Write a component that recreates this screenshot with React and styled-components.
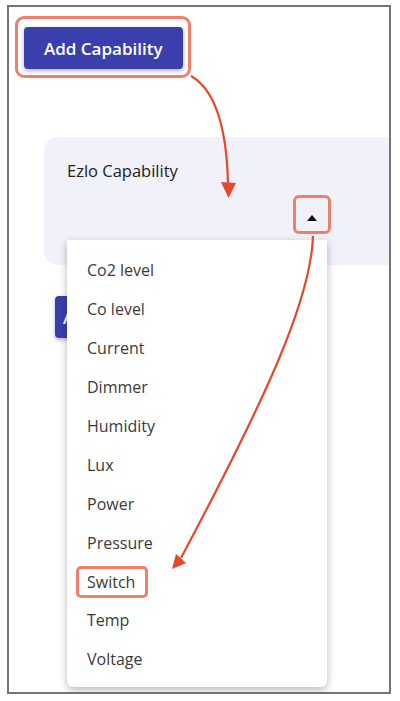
import React from "react";
import styled, { createGlobalStyle } from "styled-components";

const GlobalStyle = createGlobalStyle`
  html, body {
    margin: 0;
    padding: 0;
    background: #ffffff;
    font-family: "Open Sans", "Liberation Sans", sans-serif;
  }
`;

const Frame = styled.div`
  position: relative;
  box-sizing: border-box;
  width: 384px;
  height: 689px;
  margin: 5px 0 0 7px;
  border: 2px solid #747474;
  overflow: hidden;
  background: #ffffff;
`;

const Highlight = styled.div`
  display: inline-flex;
  border: 3px solid #ee806b;
  border-radius: 9px;
  padding: 8px 5px 6px 6px;
  margin: 9px 0 0 6px;
`;

const PrimaryButton = styled.button`
  height: 42px;
  padding: 0 ${(p) => p.$padX || 20}px;
  border: none;
  border-radius: 4px;
  background: #3b3fae;
  color: #ffffff;
  font-family: inherit;
  font-size: 17px;
  font-weight: 600;
  box-shadow: 0 2px 4px rgba(40, 40, 90, 0.35);
  cursor: pointer;
`;

const Card = styled.div`
  margin: 59px -20px 0 35px;
  padding: 24px 0 23px 23px;
  background: #f0f1f9;
  border-radius: 14px;
`;

const Label = styled.div`
  font-size: 16.5px;
  line-height: 20px;
  color: #222222;
`;

const SelectField = styled.div`
  position: relative;
  width: 260px;
  margin-top: 14px;
  padding-bottom: 6px;
  display: flex;
  justify-content: flex-end;
  border-bottom: 2px solid #3b3fae;
`;

const IconBox = styled.div`
  box-sizing: border-box;
  width: 38px;
  height: 39px;
  margin-right: -4px;
  display: flex;
  align-items: center;
  justify-content: center;
  padding-top: 6px;
  border: 3px solid #ee806b;
  border-radius: 6px;
`;

const Menu = styled.ul`
  position: absolute;
  z-index: 2;
  top: 100%;
  left: 0;
  width: 260px;
  margin: 0;
  padding: 11px 0 8px;
  list-style: none;
  background: #ffffff;
  border-radius: 0 0 6px 6px;
  box-shadow: 0 3px 9px rgba(0, 0, 0, 0.28);
`;

const MenuItem = styled.li`
  height: 38.9px;
  display: flex;
  align-items: center;
  padding-left: 20px;
  font-size: 16px;
  color: #3a3a3a;
`;

const ItemText = styled.span`
  ${(p) =>
    p.$marked &&
    `
    border: 3px solid #ee806b;
    border-radius: 5px;
    padding: 2px 10px 2px 8px;
    margin-left: -11px;
  `}
`;

const NextButtonRow = styled.div`
  margin: 31px 0 0 46px;
`;

const Annotations = styled.svg`
  position: absolute;
  z-index: 3;
  left: -9px;
  top: -7px;
  pointer-events: none;
`;

const items = [
  "Co2 level",
  "Co level",
  "Current",
  "Dimmer",
  "Humidity",
  "Lux",
  "Power",
  "Pressure",
  "Switch",
  "Temp",
  "Voltage",
];

const App = () => {
  return (
    <>
      <GlobalStyle />
      <Frame>
        <Highlight>
          <PrimaryButton>Add Capability</PrimaryButton>
        </Highlight>
        <Card>
          <Label>Ezlo Capability</Label>
          <SelectField>
            <IconBox>
              <svg width="10" height="6" viewBox="0 0 10 6">
                <path d="M0 6 L5 0 L10 6 Z" fill="#111" />
              </svg>
            </IconBox>
            <Menu>
              {items.map((item) => (
                <MenuItem key={item}>
                  <ItemText $marked={item === "Switch"}>{item}</ItemText>
                </MenuItem>
              ))}
            </Menu>
          </SelectField>
        </Card>
        <NextButtonRow>
          <PrimaryButton $padX={8}>A</PrimaryButton>
        </NextButtonRow>
        <Annotations width="400" height="701" viewBox="0 0 400 701">
          <path
            d="M191 76 Q 226 96 228 184"
            fill="none"
            stroke="#e5492d"
            strokeWidth="2.2"
          />
          <polygon points="221,182 236,183 228.5,198" fill="#e5492d" />
          <path
            d="M313 236 C 311 300, 265 400, 181 558"
            fill="none"
            stroke="#e5492d"
            strokeWidth="2.2"
          />
          <polygon points="186,563 176,554 172,569" fill="#e5492d" />
        </Annotations>
      </Frame>
    </>
  );
};

export default App;
